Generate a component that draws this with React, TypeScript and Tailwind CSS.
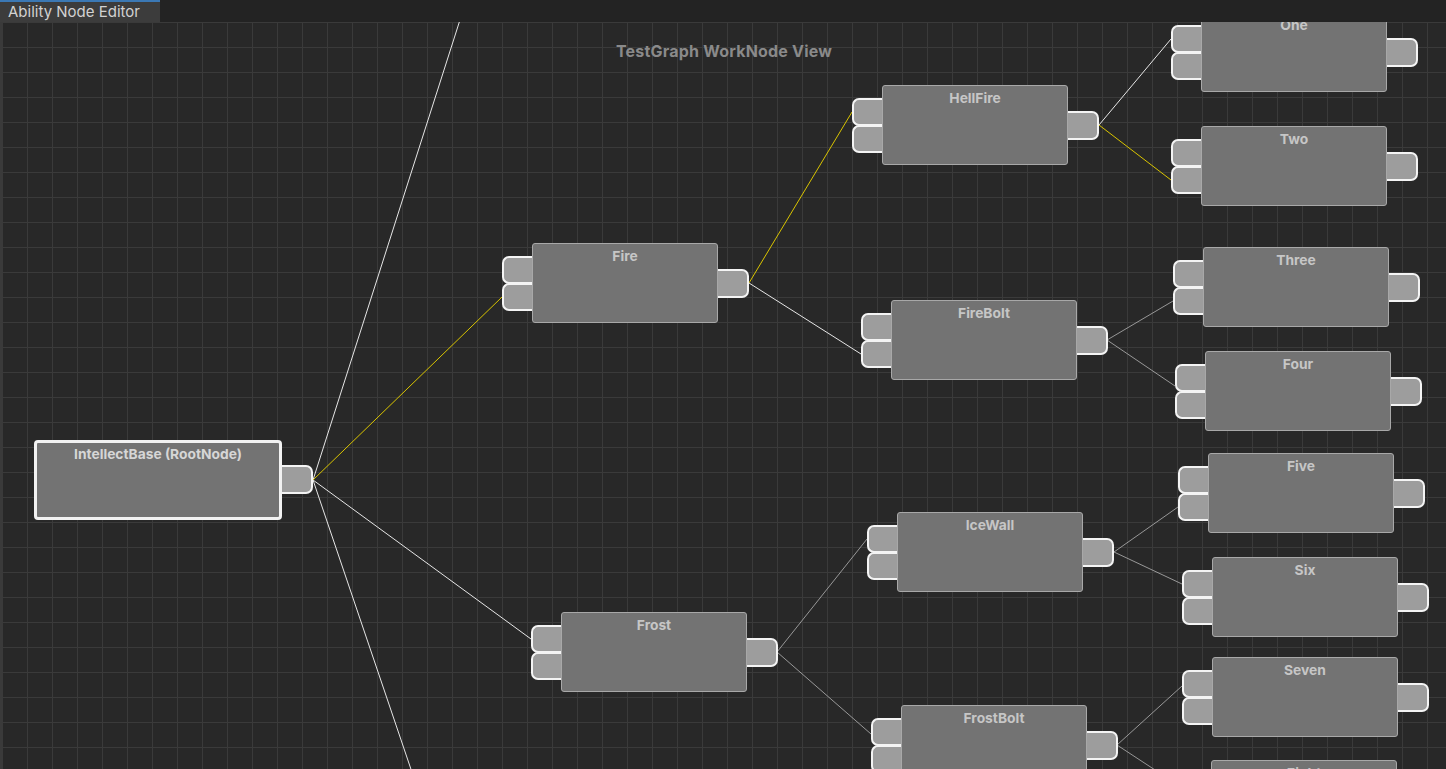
import React from "react";

type N = { t: string; x: number; y: number; root?: boolean };

const nodes: N[] = [
  { t: "IntellectBase (RootNode)", x: 34, y: 440, root: true },
  { t: "Fire", x: 532, y: 243 },
  { t: "Frost", x: 561, y: 612 },
  { t: "HellFire", x: 882, y: 85 },
  { t: "FireBolt", x: 891, y: 300 },
  { t: "IceWall", x: 897, y: 512 },
  { t: "FrostBolt", x: 901, y: 705 },
  { t: "One", x: 1201, y: 12 },
  { t: "Two", x: 1201, y: 126 },
  { t: "Three", x: 1203, y: 247 },
  { t: "Four", x: 1205, y: 351 },
  { t: "Five", x: 1208, y: 453 },
  { t: "Six", x: 1212, y: 557 },
  { t: "Seven", x: 1212, y: 657 },
  { t: "Eight", x: 1211, y: 760 },
];

const W = "#e6e6e6";
const Y = "#d9c400";
const G = "#b4b4b4";

// page coordinates
const edges: [number, number, number, number, string, number][] = [
  [313, 480, 467, -2, W, 1],
  [313, 480, 502, 297, Y, 1],
  [313, 480, 531, 639, W, 1],
  [313, 480, 418, 790, W, 1],
  [749, 283, 852, 112, Y, 1],
  [749, 283, 861, 354, W, 1],
  [1099, 125, 1171, 39, W, 1],
  [1099, 125, 1171, 180, Y, 1],
  [1107, 340, 1173, 301, G, 0.8],
  [1107, 340, 1175, 386, G, 0.8],
  [1114, 552, 1178, 507, G, 0.8],
  [1114, 552, 1182, 584, G, 0.8],
  [777, 652, 867, 539, G, 0.8],
  [777, 652, 871, 734, G, 0.8],
  [1117, 745, 1182, 686, G, 0.8],
  [1117, 745, 1181, 787, G, 0.8],
];

function Node({ n }: { n: N }) {
  const bw = n.root ? 248 : 186;
  const left = n.root ? n.x : n.x - 30;
  const off = n.root ? 0 : 30;
  return (
    <div
      className="absolute h-[80px]"
      style={{ left, top: n.y - 22, width: off + bw + 31 }}
    >
      {!n.root && (
        <div className="absolute left-0 top-[13px] flex flex-col">
          <div className="w-[36px] h-[28px] rounded-l-[7px] border-2 border-r-0 border-[#f4f4f4] bg-[#9d9d9d]" />
          <div className="w-[36px] h-[28px] -mt-px rounded-l-[7px] border-2 border-r-0 border-[#f4f4f4] bg-[#9d9d9d]" />
        </div>
      )}
      <div
        className={`absolute h-[29px] w-[36px] rounded-r-[7px] border-2 border-l-0 border-[#f4f4f4] bg-[#9d9d9d] ${
          n.root ? "top-[25px]" : "top-[26px]"
        }`}
        style={{ left: off + bw - 5 }}
      />
      <div
        className={`absolute top-0 h-[80px] bg-[#737373] text-center font-bold text-[13.8px] leading-[18px] ${
          n.root
            ? "border-[3px] border-[#f2f2f2] rounded-[4px] text-[#d6d6d6] pt-[2px]"
            : "border border-[#a8a8a8] rounded-[3px] text-[#c6c6c6] pt-[3px]"
        }`}
        style={{ left: off, width: bw }}
      >
        {n.t}
      </div>
    </div>
  );
}

export default function App() {
  return (
    <div
      className="w-[1446px] h-[769px] overflow-hidden bg-[#262626] flex flex-col"
      style={{ fontFamily: "Inter, 'Noto Sans', sans-serif" }}
    >
      <div className="h-[22px] flex shrink-0 bg-[#232323]">
        <div className="w-[160px] h-[22px] bg-[#3c3c3c] border-t-2 border-[#3b78b4] text-[15px] leading-[19px] text-[#d2d2d2] pl-[8px]">
          Ability Node Editor
        </div>
      </div>
      <div className="relative flex-1 overflow-hidden bg-[#282828] bg-[linear-gradient(to_right,#3a3a3a_1px,transparent_1px),linear-gradient(to_bottom,#3a3a3a_1px,transparent_1px)] bg-[size:25px_25px] border-l-2 border-[#3a3a3a]">
        <div className="pt-[19px] text-center text-[16px] font-bold leading-[20px] text-[#8a8a8a] tracking-[0.2px]">
          TestGraph WorkNode View
        </div>
        <svg className="absolute -left-[2px] top-0" width={1446} height={747}>
          {edges.map((e, i) => (
            <line
              key={i}
              x1={e[0]}
              y1={e[1] - 22}
              x2={e[2]}
              y2={e[3] - 22}
              stroke={e[4]}
              strokeWidth={e[5]}
            />
          ))}
        </svg>
        <div className="absolute -left-[2px] top-0 w-[1446px] h-[747px]">
          {nodes.map((n) => (
            <Node key={n.t} n={n} />
          ))}
        </div>
      </div>
    </div>
  );
}
